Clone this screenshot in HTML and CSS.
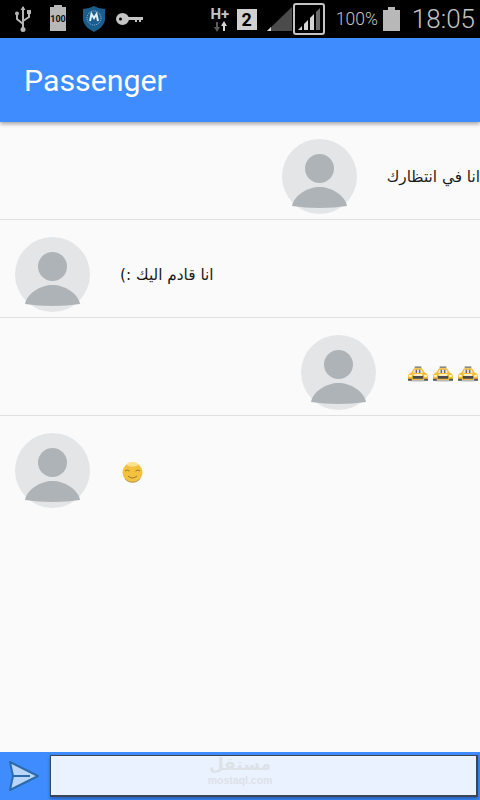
FILE: index.html
```html
<!DOCTYPE html>
<html lang="en">
  <head>
    <meta charset="UTF-8" />
    <meta name="viewport" content="width=device-width, initial-scale=1.0" />
    <title>Passenger</title>
    <link rel="stylesheet" href="styles.css">
  </head>
  <body>
    <svg class="defs" width="0" height="0">
      <symbol id="avatar" viewBox="0 0 75 75">
        <circle cx="37.5" cy="37.5" r="37.5" fill="#e3e5e7" />
        <circle cx="37.5" cy="29.5" r="14.5" fill="#aeb3b7" />
        <path d="M10 67C12 56 26 48 37.5 48S63 56 65 67Q52 69 37.5 69T10 67Z" fill="#aeb3b7" />
      </symbol>
      <symbol id="taxi" viewBox="0 0 21 16">
        <ellipse cx="10.500" cy="14.500" rx="10.500" ry="1.500" fill="#b9b9b9" />
        <rect x="7" y="0" width="7" height="2" fill="#8a8a80" />
        <path d="M4 6L5.500 3Q6 2 7 2H14Q15 2 15.500 3L17 6L20 8Q21 9 21 11V14H0V11Q0 9 1 8Z" fill="#f6bd35" />
        <path d="M5.500 7L6.500 3.500H14.500L15.500 7Z" fill="#e9e6dc" />
        <path d="M8 3.500H9.500V7H8ZM11.500 3.500H13V7H11.500Z" fill="#6a6a6a" />
        <rect x="5" y="10" width="11" height="3" fill="#4b4b4b" />
        <rect x="6" y="8" width="9" height="2" fill="#fff3c9" />
        <rect x="1" y="9" width="3" height="2" fill="#fff3c9" />
        <rect x="17" y="9" width="3" height="2" fill="#fff3c9" />
        <rect x="0" y="13" width="4" height="2" fill="#555" />
        <rect x="17" y="13" width="4" height="2" fill="#555" />
      </symbol>
    </svg>

    <div id="container">
      <div class="status-bar">
        <div class="status-left">
          <svg class="usb" width="16" height="26" viewBox="0 0 16 26">
            <path d="M8 1V25M8 18L2 13V9M8 15L14 11V8" fill="none" stroke="#b5b5b5" stroke-width="2" />
            <path d="M8 0L10.500 4H5.500Z" fill="#b5b5b5" />
            <circle cx="2" cy="7.500" r="2" fill="#b5b5b5" />
            <rect x="12" y="4" width="4" height="4" fill="#b5b5b5" />
            <circle cx="8" cy="23.500" r="2.500" fill="#b5b5b5" />
          </svg>
          <div class="batt-small"><span>100</span></div>
          <svg class="shield" width="22" height="26" viewBox="0 0 22 26">
            <path d="M11 0Q16 3 22 3V14Q21 21 11 26Q1 21 0 14V3Q6 3 11 0Z" fill="#1a5d8f" />
            <circle cx="11" cy="12" r="7" fill="none" stroke="#9fc3dc" stroke-width="1" stroke-dasharray="1 1" />
            <path d="M7 15L8.500 8L11 12L13.500 8L15 15" fill="none" stroke="#e4eef5" stroke-width="2" />
          </svg>
          <svg class="key" width="27" height="14" viewBox="0 0 27 14">
            <ellipse cx="6.500" cy="7" rx="6.500" ry="6" fill="#c4c4c4" />
            <circle cx="4.500" cy="7" r="1.500" fill="#000" />
            <path d="M12 5H27V8H25V10H23V8H21V10H19V8H12Z" fill="#c4c4c4" />
          </svg>
        </div>
        <div class="status-right">
          <div class="net-type">
            <span>H+</span>
            <svg width="14" height="11" viewBox="0 0 14 11">
              <path d="M3 1H5V6H7L4 11L1 6H3Z" fill="#5b5b5b" />
              <path d="M10 10H12V5H14L11 0L8 5H10Z" fill="#d5d5d5" />
            </svg>
          </div>
          <div class="sim">2</div>
          <svg class="signal" width="25" height="24" viewBox="0 0 25 24">
            <path d="M0 24L25 0V24Z" fill="#4b4b4b" />
            <path d="M0 24L4 20V24Z" fill="#d5d5d5" />
          </svg>
          <div class="signal-box">
            <svg width="26" height="24" viewBox="0 0 26 24">
              <path d="M2 23L6 19V23ZM8 23V17L12 13V23ZM14 23V11L18 7V23Z" fill="#d5d5d5" />
              <path d="M20 23V5L24 1V23Z" fill="#6b6b6b" />
            </svg>
          </div>
          <span class="percent">100%</span>
          <div class="batt-big"></div>
          <span class="clock">18:05</span>
        </div>
      </div>

      <div class="app-bar">Passenger</div>

      <div class="messages">
        <div class="row row-end">
          <svg class="avatar"><use href="#avatar" /></svg>
          <div class="msg" dir="rtl">انا في انتظارك</div>
        </div>
        <div class="row">
          <svg class="avatar"><use href="#avatar" /></svg>
          <div class="msg" dir="rtl">انا قادم اليك :)</div>
        </div>
        <div class="row row-end">
          <svg class="avatar"><use href="#avatar" /></svg>
          <div class="msg taxis">
            <svg class="taxi"><use href="#taxi" /></svg>
            <svg class="taxi"><use href="#taxi" /></svg>
            <svg class="taxi"><use href="#taxi" /></svg>
          </div>
        </div>
        <div class="row no-border">
          <svg class="avatar"><use href="#avatar" /></svg>
          <div class="msg">
            <svg class="smile" width="21" height="21" viewBox="0 0 21 21">
              <circle cx="10.500" cy="10.500" r="10" fill="#f4c13f" />
              <path d="M4 2.500A10 10 0 0 1 17 2.500Q10.500 7 4 2.500Z" fill="#fbe08e" />
              <path d="M3 9Q5 7 7.500 9M13.500 9Q16 7 18 9M6 14Q10.500 18 15 14" fill="none" stroke="#9a7a2c" stroke-width="1" />
              <path d="M2 16A10 10 0 0 0 19 16Q10.500 23 2 16Z" fill="#c2a25a" />
            </svg>
          </div>
        </div>
      </div>

      <div class="composer">
        <svg class="send" width="30" height="30" viewBox="0 0 30 30">
          <path d="M1 1L29 15L1 29L4 15Z" fill="#b9d5fb" stroke="#2b6ca8" stroke-width="2" stroke-linejoin="round" />
          <path d="M4 15H21" stroke="#2b6ca8" stroke-width="2" />
        </svg>
        <div class="input-wrap">
          <input class="input" type="text" />
          <div class="watermark">
            <span class="wm-ar">مستقل</span>
            <span class="wm-en">mostaql.com</span>
          </div>
        </div>
      </div>
    </div>
  </body>
</html>
```

FILE: styles.css
```css
html {
  box-sizing: border-box;
}
body {
  margin: 0;
  padding: 0;
  font-family: Roboto, "Liberation Sans", sans-serif;
  background-color: #fafafa;
}
.defs {
  display: block;
  height: 0;
}
#container {
  display: flex;
  flex-direction: column;
  height: 800px;
  overflow: hidden;
}

/* status bar */
.status-bar {
  display: flex;
  justify-content: space-between;
  align-items: center;
  height: 38px;
  background-color: #000;
  color: #c4c4c4;
}
.status-left {
  display: flex;
  align-items: center;
  padding-left: 15px;
}
.batt-small {
  position: relative;
  display: flex;
  align-items: center;
  justify-content: center;
  width: 16px;
  height: 24px;
  margin-left: 19px;
  background-color: #b8b8b8;
  color: #111;
  font-size: 9px;
  font-weight: 700;
}
.batt-small::before {
  content: "";
  position: absolute;
  top: -2px;
  left: 4px;
  width: 8px;
  height: 2px;
  background-color: #b8b8b8;
}
.shield {
  margin-left: 17px;
}
.key {
  margin-left: 11px;
}
.status-right {
  display: flex;
  align-items: center;
  padding-right: 5px;
}
.net-type {
  display: flex;
  flex-direction: column;
  align-items: center;
  width: 20px;
  font-size: 15px;
  font-weight: 700;
  line-height: 14px;
}
.sim {
  width: 20px;
  height: 21px;
  margin-left: 7px;
  background-color: #d0d0d0;
  color: #000;
  font-size: 18px;
  font-weight: 700;
  line-height: 21px;
  text-align: center;
}
.signal {
  margin-left: 10px;
}
.signal-box {
  display: flex;
  align-items: center;
  justify-content: center;
  width: 32px;
  height: 32px;
  margin-left: 1px;
  box-sizing: border-box;
  border: 2px solid #c4c4c4;
  border-radius: 3px;
}
.percent {
  margin-left: 11px;
  font-size: 17.500px;
  font-weight: 300;
}
.batt-big {
  position: relative;
  width: 17px;
  height: 21px;
  margin-top: 2px;
  margin-left: 5px;
  background-color: #b8b8b8;
}
.batt-big::before {
  content: "";
  position: absolute;
  top: -3px;
  left: 5px;
  width: 7px;
  height: 3px;
  background-color: #b8b8b8;
}
.clock {
  margin-left: 12px;
  font-size: 26px;
  font-weight: 300;
}

/* app bar */
.app-bar {
  position: relative;
  height: 84px;
  padding-left: 24px;
  background-color: #3f8cff;
  box-shadow: 0 2px 4px rgba(0, 0, 0, 0.35);
  color: white;
  font-size: 30.300px;
  line-height: 85px;
}

/* messages */
.messages {
  flex: 1;
}
.row {
  display: flex;
  align-items: center;
  gap: 30px;
  height: 98px;
  box-sizing: border-box;
  padding: 17px 0 5px 15px;
  border-bottom: 1px solid #e0e0e0;
}
.row-end {
  justify-content: flex-end;
}
.no-border {
  border-bottom-color: transparent;
}
.avatar {
  width: 75px;
  height: 75px;
}
.msg {
  display: flex;
  align-items: center;
  color: #1a1a1a;
  font-family: "DejaVu Sans", sans-serif;
  font-size: 15.300px;
}
.taxis {
  gap: 5px;
  margin-left: 2px;
  margin-right: 2px;
  margin-top: 2px;
}
.taxi {
  width: 20px;
  height: 16px;
}
.smile {
  margin-left: 2px;
  margin-top: 4px;
}

/* composer */
.composer {
  display: flex;
  align-items: center;
  height: 48px;
  padding-right: 2px;
  background-color: #3f8cff;
}
.send {
  margin-left: 9px;
  margin-right: 11px;
  flex-shrink: 0;
}
.input-wrap {
  position: relative;
  flex: 1;
  height: 42px;
}
.input {
  width: 100%;
  height: 100%;
  box-sizing: border-box;
  padding: 0 6px;
  border: 1px solid #3a4656;
  border-right-width: 2px;
  border-bottom-width: 2px;
  background-color: #ebf2ff;
  box-shadow: 0 2px 3px rgba(20, 50, 110, 0.5);
}
.watermark {
  position: absolute;
  top: -1px;
  left: 159px;
  display: flex;
  flex-direction: column;
  align-items: center;
  width: 62px;
  color: #dde1e8;
  font-family: "DejaVu Sans", sans-serif;
  font-weight: 700;
  pointer-events: none;
}
.wm-ar {
  font-size: 17px;
  line-height: 20px;
}
.wm-en {
  font-family: "Liberation Sans", sans-serif;
  font-size: 10.500px;
  line-height: 12px;
}
```
